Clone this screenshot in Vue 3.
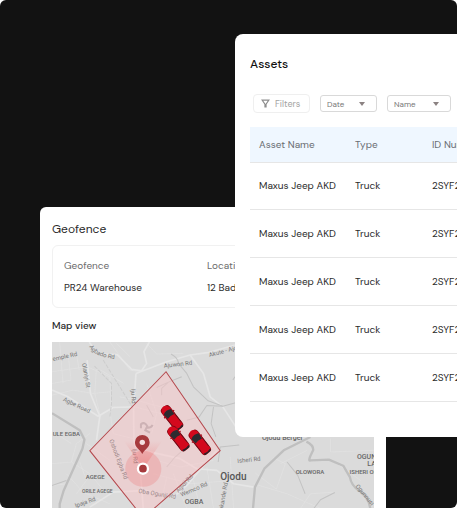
<script setup>
const filters = [
  { id: 'date', label: 'Date', options: ['Date'] },
  { id: 'name', label: 'Name', options: ['Name'] },
]
const columns = ['Asset Name', 'Type', 'ID Number']
const assets = Array.from({ length: 5 }, (_, i) => ({
  key: i,
  name: 'Maxus Jeep AKD',
  type: 'Truck',
  id: '2SYF2400',
}))
const cars = [
  { x: 516, y: 1253 },
  { x: 535, y: 1315 },
  { x: 599, y: 1326 },
]
const streets = [
  { t: 'emple Rd', x: 160, y: 1083, r: -12 },
  { t: 'Olaniyi St', x: 247, y: 1090, r: 80 },
  { t: 'Agbe Road', x: 189, y: 1202, r: 25 },
  { t: 'Iju Rd', x: 394, y: 1166, r: 88 },
  { t: 'Ajuwon Rd', x: 492, y: 1103, r: -6 },
  { t: 'Akute - Ajowa', x: 628, y: 1071, r: -15 },
  { t: 'Ipaja Rd', x: 228, y: 1522, r: -20 },
  { t: 'Wemco Rd', x: 544, y: 1489, r: -23 },
  { t: 'Isheri Rd', x: 712, y: 1388, r: -6 },
  { t: 'akande Rd', x: 668, y: 1530, r: -80 },
  { t: 'Ogunnusi', x: 1064, y: 1458, r: 50 },
]
const fenced = [
  { t: 'Iju Rd', x: 398, y: 1345, r: 86 },
  { t: 'Oshodi Egba Rd', x: 328, y: 1320, r: 69 },
  { t: 'Oba Ogunji Rd', x: 415, y: 1477, r: 9 },
  { t: 'Agidi Rd', x: 535, y: 1478, r: -48 },
]
const places = [
  { t: 'ULE EGBA', x: 159, y: 1306, c: 'mid' },
  { t: 'AGEGE', x: 258, y: 1435, c: 'mid' },
  { t: 'ORILE AGEGE', x: 247, y: 1478, c: 'small' },
  { t: 'OGBA', x: 554, y: 1511, c: 'large' },
  { t: 'OLOWORA', x: 886, y: 1420, c: 'mid' },
  { t: 'ISHERI OKE', x: 1047, y: 1422, c: 'mid' },
  { t: 'OGUN', x: 1069, y: 1376, c: 'large' },
  { t: 'LAGOS', x: 1100, y: 1398, c: 'large' },
  { t: 'Ojodu Berger', x: 785, y: 1319, c: 'town' },
  { t: 'Ojodu', x: 660, y: 1440, c: 'city' },
]
</script>

<template>
  <main class="stage">
    <section class="geofence">
      <h2 class="geofence-title">Geofence</h2>
      <dl class="details">
        <div class="detail">
          <dt>Geofence</dt>
          <dd>PR24 Warehouse</dd>
        </div>
        <div class="detail">
          <dt>Location</dt>
          <dd>12 Badagry</dd>
        </div>
      </dl>
      <h3 class="map-title">Map view</h3>
      <svg class="map" viewBox="157 1026 963 510" role="img" aria-label="Map view">
        <defs>
          <linearGradient id="beam" x1="0" y1="1" x2="0" y2="0">
            <stop offset="0" stop-color="#ee6d6d" stop-opacity=".5" />
            <stop offset="1" stop-color="#ee6d6d" stop-opacity="0" />
          </linearGradient>
          <path id="agbado" d="M268 1040C282 1064 302 1070 342 1077" />
          <g id="car">
            <rect x="-16" y="-41" width="32" height="82" rx="11" fill="#850611" />
            <path d="M-15 -22C-15 -50 15 -50 15 -22L14 34Q0 40 -14 34Z" fill="#d3091d" />
            <path d="M-14 -23Q0 -31 14 -23L12 -5Q0 -9 -12 -5Z" fill="#2c2b30" />
            <path d="M-15 -15L-13 -3V23L-15 27ZM15 -15L13 -3V23L15 27Z" fill="#57101a" />
            <path d="M-12 34Q0 39 12 34L11 40H-11Z" fill="#292329" />
            <path d="M-19 -14H-15M15 -14H19" stroke="#a30b18" stroke-width="4" />
          </g>
        </defs>
        <rect x="157" y="1026" width="963" height="510" fill="#dbdbdb" />

        <g class="lanes">
          <path d="M157 1115L205 1108L262 1100L330 1130M180 1026L190 1150M205 1060L214 1140L157 1150M230 1060L238 1110M157 1185L220 1170L280 1180L330 1175M290 1100L285 1180L302 1250M330 1130L334 1230M302 1110L372 1150M157 1390L215 1385L270 1420L320 1480M215 1385L230 1330L270 1300M200 1420L250 1475L330 1510M160 1455L200 1450M240 1385L260 1440L230 1480M260 1330L330 1380M330 1230L340 1300L420 1320M360 1190L410 1200L500 1225M440 1150L470 1240L455 1300M405 1220L500 1245M470 1380L540 1400L640 1380M460 1420L570 1450L700 1440M520 1420L560 1524M580 1440L600 1524M620 1400L640 1524M500 1430L480 1524M690 1370L700 1524M760 1450L860 1480L960 1524M840 1390L920 1350M990 1315V1355L1120 1350M1010 1390L1080 1440M900 1524L930 1480L1000 1475M440 1030L470 1062L550 1060M350 1030L390 1070M170 1300L215 1330M330 1026L390 1110L420 1115" />
          <path d="M765 1418L828 1466L855 1390L818 1372" />
        </g>
        <g class="roads">
          <path d="M268 1026L295 1062L352 1064L395 1108L425 1112L440 1090L432 1055L448 1026" />
          <path d="M408 1120L500 1085L570 1065L622 1058L704 1035" />
          <path d="M570 1065L610 1120L630 1190L668 1220L720 1300" />
          <path d="M262 1080L272 1180L300 1248L290 1320" />
          <path d="M157 1170L205 1190L295 1248L340 1222L402 1220" />
          <path d="M408 1120L401 1230L402 1320L420 1400L430 1524" />
          <path d="M430 1350L540 1375L590 1405L650 1410L700 1450L760 1460" />
          <path d="M270 1520L340 1475L440 1470L520 1490L560 1455L650 1350" />
        </g>
        <g class="streams">
          <path d="M513 1062Q535 1075 535 1090L560 1120L580 1160L624 1202L668 1218" />
          <path d="M545 1130L505 1146L485 1165V1185M505 1146L470 1162" />
          <path d="M668 1218L620 1216L597 1250L560 1260M640 1220L633 1270L647 1310M668 1218L706 1208" />
          <path d="M500 1400L525 1370L560 1340M440 1215L460 1250" />
          <path d="M654 1385L660 1340L717 1334" />
          <path d="M860 1385L892 1425L914 1480M1003 1476L960 1498L940 1524" />
          <path d="M157 1455L200 1440M704 1130L698 1140" />
          <path d="M284 1098L335 1150V1210L330 1250M310 1080L400 1225" class="dashed" />
        </g>
        <g class="highways">
          <path d="M157 1239L240 1290L254 1318L248 1345L192 1470L180 1510V1536" />
          <path d="M930 1310L850 1350L792 1405L764 1460L757 1536" />
          <path d="M918 1324Q940 1335 938 1350Q920 1385 930 1380L985 1378L1028 1396L1048 1430Q1052 1455 1075 1470Q1108 1490 1110 1536" />
        </g>

        <g class="streets">
          <text v-for="s in streets" :key="s.t" :transform="`translate(${s.x} ${s.y}) rotate(${s.r})`">{{ s.t }}</text>
          <text><textPath href="#agbado">Agbado Rd</textPath></text>
        </g>
        <text v-for="p in places" :key="p.t" :x="p.x" :y="p.y" :class="['place', p.c]">{{ p.t }}</text>

        <polygon class="fence" points="498,1115 660,1351 430,1552 270,1351" />
        <g class="streets faded">
          <text v-for="s in fenced" :key="s.t" :transform="`translate(${s.x} ${s.y}) rotate(${s.r})`">{{ s.t }}</text>
        </g>
        <path d="M423 1284V1272Q434 1263 442 1278L436 1290L450 1297M440 1282Q452 1284 458 1274" class="smudge" />
        <circle cx="430" cy="1405" r="54" fill="#f06464" opacity=".24" />
        <path d="M430 1405L372 1322H486Z" fill="url(#beam)" />
        <path d="M427 1361C419 1346 405 1342 405 1326A22 22 0 0 1 449 1326C449 1342 435 1346 427 1361Z" fill="#a63a3d" />
        <circle cx="427" cy="1326" r="8" fill="#f3dfdf" />
        <circle cx="429" cy="1405" r="15" fill="#a63a3d" stroke="#fff" stroke-width="7" />
        <use v-for="c in cars" :key="c.x" href="#car" :transform="`translate(${c.x} ${c.y}) rotate(-38)`" />
      </svg>
    </section>

    <section class="assets">
      <h1 class="assets-title">Assets</h1>
      <div class="toolbar">
        <button type="button" class="filter-button">
          <svg viewBox="0 0 16 16" class="funnel" aria-hidden="true">
            <path d="M2 2H14L9 9V14H7V9Z" />
          </svg>
          Filters
        </button>
        <div v-for="f in filters" :key="f.id" :class="['picker', f.id]">
          <select :id="f.id" :aria-label="f.label">
            <option v-for="o in f.options" :key="o">{{ o }}</option>
          </select>
          <svg viewBox="0 0 6 4" class="caret" aria-hidden="true"><path d="M0 0H6L3 4Z" /></svg>
        </div>
      </div>
      <table>
        <colgroup>
          <col class="col-name" />
          <col class="col-type" />
          <col />
        </colgroup>
        <thead>
          <tr>
            <th v-for="c in columns" :key="c" scope="col">{{ c }}</th>
          </tr>
        </thead>
        <tbody>
          <tr v-for="a in assets" :key="a.key">
            <td>{{ a.name }}</td>
            <td>{{ a.type }}</td>
            <td>{{ a.id }}</td>
          </tr>
        </tbody>
      </table>
    </section>
  </main>
</template>

<style>
body {
  margin: 0;
  background: #fff;
}
</style>

<style scoped>
.stage {
  position: relative;
  box-sizing: border-box;
  height: 100vh;
  padding: 207px 71px 0 40px;
  overflow: hidden;
  border-radius: 6px;
  background: #121212;
  font-family: "DM Sans", Inter, "Liberation Sans", sans-serif;
  font-size: 10px;
  line-height: 14px;
  color: #2b2b2b;
}

h1,
h2,
h3,
dl,
dd {
  margin: 0;
  font-weight: 400;
}

.geofence {
  padding: 13px 12px 0;
  border-radius: 6px;
  background: #fff;
}

.geofence-title {
  font-size: 12px;
  line-height: 18px;
}

.details {
  display: grid;
  grid-template-columns: 143px 1fr;
  margin-top: 7px;
  padding: 13px 11px 12px;
  border: 1px solid #f1f1f1;
  border-radius: 6px;
}

.detail {
  display: grid;
  gap: 8px;
}

dt {
  color: #6c6c6c;
}

.map-title {
  margin-top: 11px;
  font-size: 10px;
  font-weight: 500;
}

.map {
  display: block;
  width: 100%;
  margin-top: 9px;
  font-family: Roboto, sans-serif;
}

.lanes,
.roads,
.streams,
.highways {
  fill: none;
  stroke-linejoin: round;
}

.lanes {
  stroke: #e3e3e3;
  stroke-width: 2;
}

.roads {
  stroke: #e6e6e6;
  stroke-width: 5;
}

.streams {
  stroke: #c3c3c3;
  stroke-width: 3;
}

.dashed {
  stroke: #cdcdcd;
  stroke-dasharray: 12 4;
}

.highways {
  stroke: #bfbfbf;
  stroke-width: 7;
}

.streets {
  font-size: 18px;
  fill: #777;
}

.faded {
  fill: #9b8688;
}

.place {
  font-weight: 500;
  fill: #666;
}

.small {
  font-size: 15px;
}

.mid {
  font-size: 18px;
}

.large,
.town {
  font-size: 21px;
}

.city {
  font-size: 30px;
  fill: #555;
}

.fence {
  fill: #f9c5c8;
  fill-opacity: 0.5;
  stroke: #b5484d;
  stroke-width: 3;
}

.smudge {
  fill: none;
  stroke: #b99fa1;
  stroke-width: 6;
  opacity: 0.6;
}

.assets {
  position: absolute;
  top: 34px;
  left: 235px;
  box-sizing: border-box;
  width: 480px;
  padding: 20px 15px 35px;
  border-radius: 8px;
  background: #fff;
}

.assets-title {
  font-size: 12px;
  font-weight: 500;
  line-height: 20px;
  color: #111;
}

.toolbar {
  display: flex;
  align-items: center;
  gap: 10px;
  margin: 20px 0 14px 3px;
}

.filter-button {
  display: flex;
  align-items: center;
  gap: 5px;
  box-sizing: border-box;
  width: 57px;
  height: 19px;
  padding: 0 7px;
  border: 1px solid #efefef;
  border-radius: 4px;
  background: #fff;
  font: inherit;
  font-size: 9px;
  color: #a3a3a3;
}

.funnel {
  flex: none;
  width: 9px;
  height: 9px;
  fill: none;
  stroke: #8d8d8d;
  stroke-width: 2;
}

.picker {
  position: relative;
}

.date {
  width: 57px;
}

.name {
  width: 64px;
}

.picker select {
  box-sizing: border-box;
  display: block;
  width: 100%;
  height: 17px;
  padding: 0 6px;
  border: 1px solid #d9d9d9;
  border-radius: 3px;
  appearance: none;
  background: #fff;
  font: inherit;
  font-size: 8px;
  color: #777;
}

.caret {
  position: absolute;
  top: 7px;
  right: 12px;
  width: 6px;
  height: 4px;
  fill: #8b8282;
  pointer-events: none;
}

table {
  width: 100%;
  border-collapse: separate;
  border-spacing: 0;
  table-layout: fixed;
}

.col-name {
  width: 96px;
}

.col-type {
  width: 77px;
}

th,
td {
  box-sizing: border-box;
  padding: 0 0 0 9px;
  border-bottom: 1px solid #e6e6e6;
  text-align: left;
  font-weight: 400;
}

th {
  height: 36px;
  background: #eff7ff;
  color: #6a6e73;
}

td {
  height: 48px;
}

tbody tr:first-child td {
  height: 47px;
}
</style>
